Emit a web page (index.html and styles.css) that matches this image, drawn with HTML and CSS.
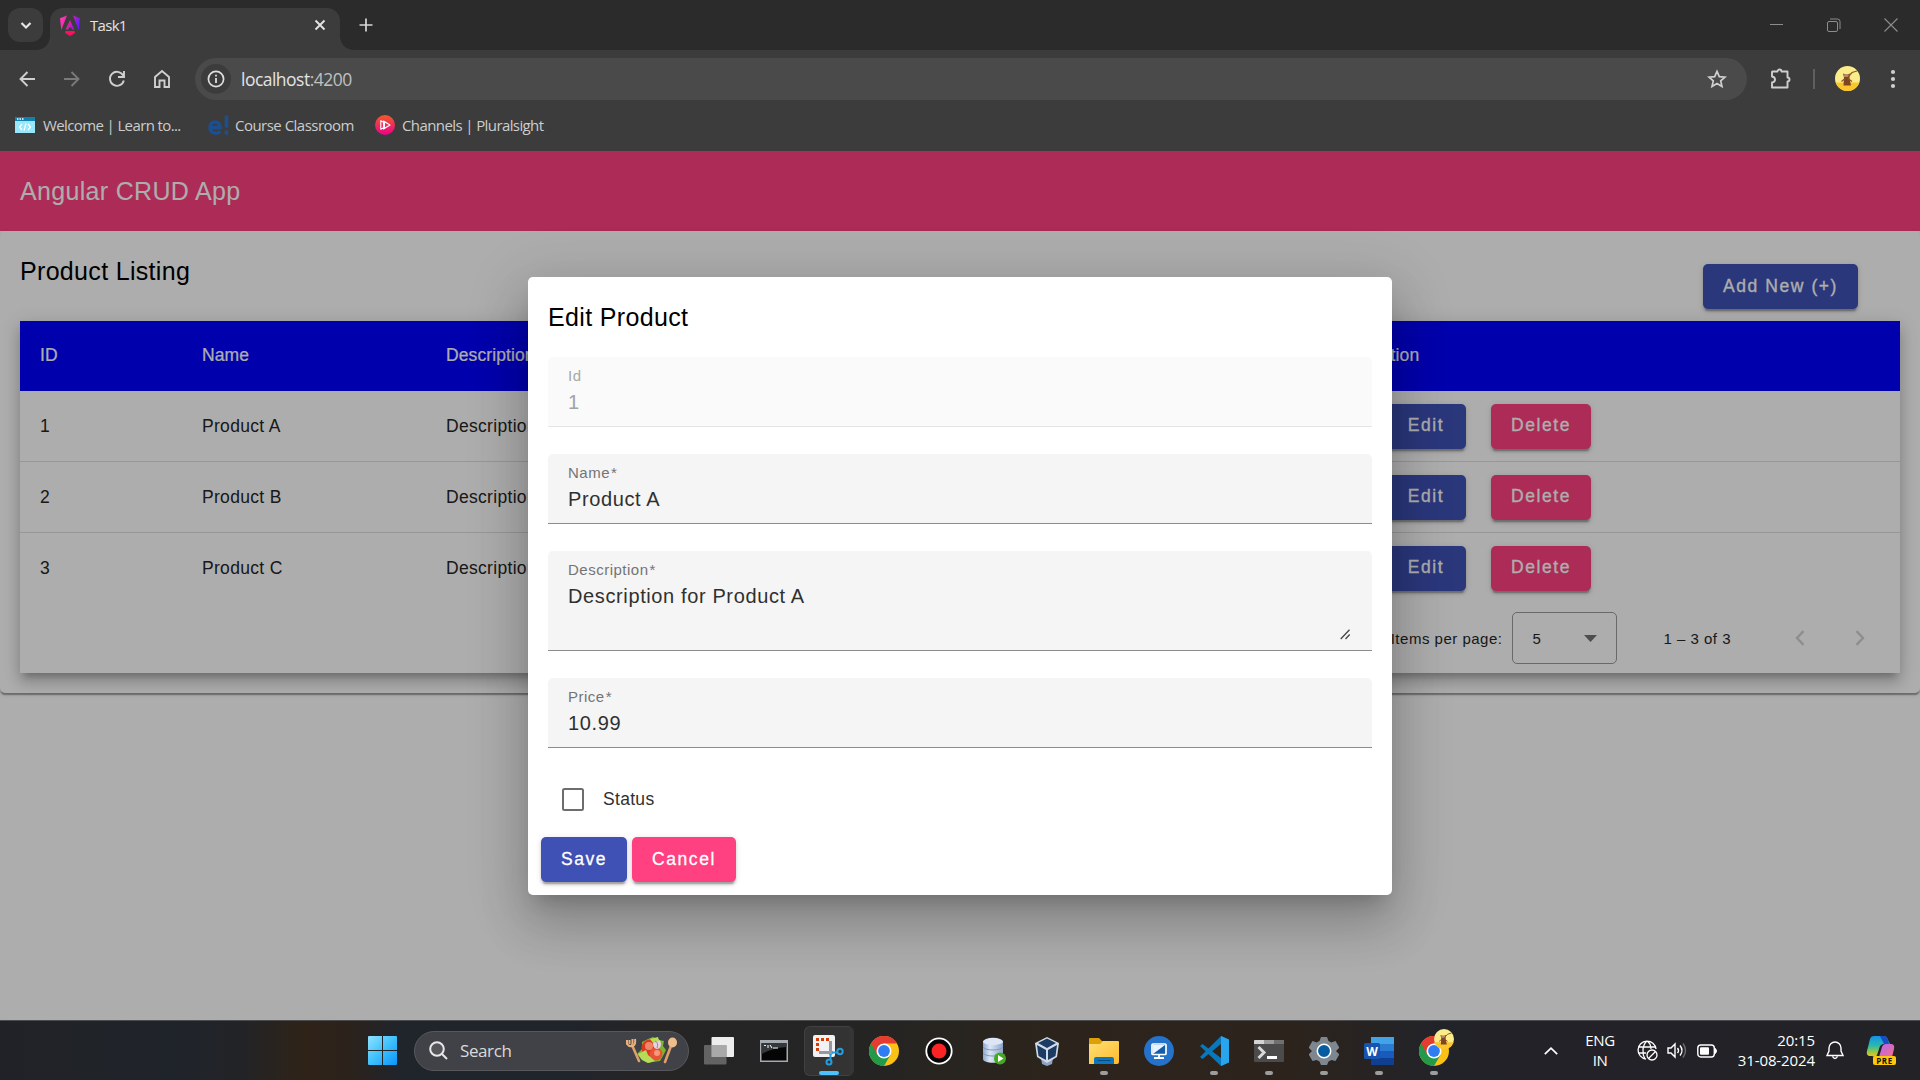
FILE: index.html
```html
<!DOCTYPE html>
<html lang="en">
<head>
<meta charset="utf-8">
<title>Task1</title>
<link rel="stylesheet" href="styles.css">
</head>
<body>
<svg width="0" height="0" class="defs" aria-hidden="true">
  <defs>
    <linearGradient id="ng" x1="0" y1="0" x2="1" y2="0.3"><stop offset="0" stop-color="#ff41c8"/><stop offset=".5" stop-color="#f0209a"/><stop offset="1" stop-color="#6a1bff"/></linearGradient>
    <linearGradient id="win" x1="0" y1="0" x2="1" y2="1"><stop offset="0" stop-color="#8fe3ff"/><stop offset=".5" stop-color="#3fc0fb"/><stop offset="1" stop-color="#0a94fb"/></linearGradient>
    <linearGradient id="plural" x1="0" y1="0" x2="0" y2="1"><stop offset="0" stop-color="#f15b2a"/><stop offset="1" stop-color="#ec008c"/></linearGradient>
    <linearGradient id="folder" x1="0" y1="0" x2="1" y2="1"><stop offset="0" stop-color="#ffdf76"/><stop offset="1" stop-color="#fdbc2c"/></linearGradient>
    <linearGradient id="disk" x1="0" y1="0" x2="1" y2="0"><stop offset="0" stop-color="#8fa8cf"/><stop offset=".35" stop-color="#dde7f6"/><stop offset="1" stop-color="#8ba3c9"/></linearGradient>
    <linearGradient id="copA" x1="0" y1="0" x2="0" y2="1"><stop offset="0" stop-color="#1592ea"/><stop offset=".45" stop-color="#26b8b0"/><stop offset=".8" stop-color="#a5c83c"/><stop offset="1" stop-color="#f5c21b"/></linearGradient>
    <linearGradient id="copB" x1="0" y1="0" x2="1" y2="1"><stop offset="0" stop-color="#b765f4"/><stop offset="1" stop-color="#f2708a"/></linearGradient>
    <symbol id="chrome" viewBox="0 0 30 30">
      <circle cx="15" cy="15" r="15" fill="#fbc116"/>
      <path d="M15 15 L2 7.5 A15 15 0 0 0 15 30 L21.5 18.7Z" fill="#229a4a"/>
      <path d="M2 7.5 A15 15 0 0 1 28 7.5 H15 L8.5 18.7Z" fill="#e53b30"/>
      <circle cx="15" cy="15" r="7.5" fill="#fff"/><circle cx="15" cy="15" r="5.9" fill="#2f7cf3"/>
    </symbol>
    <symbol id="avatar" viewBox="0 0 25 25">
      <circle cx="12.5" cy="12.5" r="12.5" fill="#fbec8b"/><path d="M.6 16.5H24.4A12.5 12.5 0 0 1 .6 16.5Z" fill="#fbc62c"/>
      <path d="M8.5 19.5L9 11.5L8 7.5L10.5 8.5H12.5L15 7.5L14.5 12L16 19.5Z" fill="#7e4522"/><path d="M9 8.5H14V11H9Z" fill="#b98a62"/><path d="M6.5 15.5L10 12.5M13 12.5L17 15.5M13 11L17 6.500L22 5" fill="none" stroke="#8f5527" stroke-width="1.2"/>
    </symbol>
  </defs>
</svg>

<header class="browser">
  <div class="tabstrip">
    <div class="tab-search"><svg width="12" height="12" viewBox="0 0 12 12"><path d="M1.500 4l4.500 4.500L10.500 4" fill="none" stroke="#e6e6e6" stroke-width="2.200"/></svg></div>
    <div class="tab">
      <svg width="20" height="21" viewBox="0 0 20 21" fill="url(#ng)"><path d="M7 .5L0 3.300L1.300 15L7 .5ZM13 .5L20 3.300L18.700 15L13 .5ZM10 5L5.600 14.500H8.300L9 12.500H11.300L12 14.500H14.400Z"/><path d="M5.500 16H14.500L15 18L10 21L5 18Z" fill="#fa1060"/></svg>
      <span class="tab-title">Task1</span>
      <svg class="tab-close" width="12" height="12" viewBox="0 0 12 12"><path d="M1.500 1.500l9 9M10.500 1.500l-9 9" stroke="#e3e3e3" stroke-width="1.900"/></svg>
    </div>
    <svg class="new-tab" width="14" height="14" viewBox="0 0 14 14"><path d="M7 .5v13M.5 7h13" stroke="#d8d8d8" stroke-width="1.700"/></svg>
    <div class="window-controls">
      <svg width="14" height="14" viewBox="0 0 14 14"><path d="M0 6.500h13" stroke="#8d8d8d"/></svg>
      <svg width="14" height="14" viewBox="0 0 14 14" fill="none" stroke="#8d8d8d"><rect x=".5" y="3.500" width="10" height="10" rx="1.500"/><path d="M3 1h7.500a2.500 2.500 0 0 1 2.500 2.500v7.500"/></svg>
      <svg width="14" height="14" viewBox="0 0 14 14"><path d="M.5.5l13 13M13.500.5l-13 13" stroke="#8d8d8d" stroke-width="1.100"/></svg>
    </div>
  </div>
  <div class="toolbar">
    <div class="nav">
      <svg width="18" height="18" viewBox="0 0 18 18" fill="none" stroke="#cfcfcf" stroke-width="1.900"><path d="M17 9H2.500M9.500 2L2.500 9l7 7"/></svg>
      <svg width="18" height="18" viewBox="0 0 18 18" fill="none" stroke="#7a7a7a" stroke-width="1.900"><path d="M1 9h14.500M8.500 2l7 7-7 7"/></svg>
      <svg width="18" height="18" viewBox="0 0 18 18" fill="none" stroke="#cfcfcf" stroke-width="1.900"><path d="M15.800 10.500A7 7 0 1 1 15 5.200L16 6.500M16 1v6h-6"/></svg>
      <svg width="18" height="20" viewBox="0 0 18 20" fill="none" stroke="#cfcfcf" stroke-width="1.900"><path d="M2 8L9 2l7 6v10h-4.500v-6.500h-5V18H2Z"/></svg>
    </div>
    <div class="omnibox">
      <div class="site-info"><svg width="18" height="18" viewBox="0 0 18 18"><circle cx="9" cy="9" r="7.600" fill="none" stroke="#dedede" stroke-width="1.700"/><path d="M9 8v5M9 4.800v1.800" stroke="#dedede" stroke-width="1.800"/></svg></div>
      <span class="url">localhost<span class="port">:4200</span></span>
      <svg class="star" width="20" height="20" viewBox="0 0 20 20"><path d="M10 2.300l2.300 5.300 5.700.5-4.300 3.800 1.300 5.700-5-3-5 3 1.300-5.700L2 8.100l5.700-.5Z" fill="none" stroke="#cfcfcf" stroke-width="1.700"/></svg>
    </div>
    <div class="tools">
      <svg width="22" height="22" viewBox="0 0 22 22"><path d="M2.500 3.500H7.500a2 2 0 0 1 4 0H17.500V9.500a2 2 0 0 1 0 4V19.500H2V14.500c4-.6 4-5.400 0-6V4Z" fill="none" stroke="#cfcfcf" stroke-width="1.900" stroke-linejoin="round"/></svg>
      <span class="tool-divider"></span>
      <svg class="profile" width="25" height="25"><use href="#avatar"/></svg>
      <svg width="6" height="20" viewBox="0 0 6 20" fill="#cfcfcf"><circle cx="3" cy="3" r="2.100"/><circle cx="3" cy="10" r="2.100"/><circle cx="3" cy="17" r="2.100"/></svg>
    </div>
  </div>
  <nav class="bookmarks">
    <div class="bookmark b1"><svg width="20" height="16" viewBox="0 0 20 16"><path fill="#98e6fa" d="M0 0h20v16H0z"/><path fill="#1182ad" d="M0 0h20v4H0z"/><path d="M2 2h1.500M4.500 2H6M7 2h1.500" stroke="#fff" stroke-width="1.500"/><path d="M7 7l-2.500 3L7 13M13 7l2.500 3-2.500 3M11 6.500l-2 7" fill="none" stroke="#fff" stroke-width="1.200"/></svg><span>Welcome | Learn to...</span></div>
    <div class="bookmark b2"><svg width="21" height="20" viewBox="0 0 21 20" fill="none" stroke="#1b4f91" stroke-width="3.500"><path d="M2 12.500H12C12 5 2 5 2 12.500C2 18.500 9 19.500 12.500 16.500M18.500.500V12.500M18.500 15.500v4"/></svg><span>Course Classroom</span></div>
    <div class="bookmark b3"><svg width="20" height="20" viewBox="0 0 20 20"><circle cx="10" cy="10" r="10" fill="url(#plural)"/><path d="M5.800 5.700V14.300L9.500 12.200V7.800ZM8.500 6V14L15 10Z" fill="none" stroke="#fff" stroke-width="1.100" stroke-linejoin="round"/></svg><span>Channels | Pluralsight</span></div>
  </nav>
</header>

<main class="page">
  <div class="appbar">Angular CRUD App</div>
  <section class="card">
    <div class="card-head"><h1>Product Listing</h1><div class="btn primary add">Add New (+)</div></div>
    <div class="table">
      <div class="row head"><span>ID</span><span>Name</span><span>Description</span><span class="action">Action</span></div>
      <div class="row"><span>1</span><span>Product A</span><span>Description for Product A</span><span class="actions"><b class="btn primary">Edit</b><b class="btn accent">Delete</b></span></div>
      <div class="row"><span>2</span><span>Product B</span><span>Description for Product B</span><span class="actions"><b class="btn primary">Edit</b><b class="btn accent">Delete</b></span></div>
      <div class="row last"><span>3</span><span>Product C</span><span>Description for Product C</span><span class="actions"><b class="btn primary">Edit</b><b class="btn accent">Delete</b></span></div>
      <div class="paginator">
        <span>Items per page:</span>
        <div class="select"><span>5</span><svg width="13" height="7" viewBox="0 0 13 7"><path d="M0 0h13L6.500 7z" fill="#737373"/></svg></div>
        <span class="range">1 – 3 of 3</span>
        <svg class="prev" width="10" height="16" viewBox="0 0 10 16"><path d="M8.500 1.200L2 8l6.500 6.800" fill="none" stroke="#d2d2d2" stroke-width="2.400"/></svg>
        <svg width="10" height="16" viewBox="0 0 10 16"><path d="M1.500 1.200L8 8l-6.500 6.800" fill="none" stroke="#d2d2d2" stroke-width="2.400"/></svg>
      </div>
    </div>
  </section>
  <div class="backdrop">
    <form class="dialog">
      <h2>Edit Product</h2>
      <div class="field disabled"><label>Id</label><div class="value">1</div></div>
      <div class="field"><label>Name<i>*</i></label><div class="value">Product A</div></div>
      <div class="field area"><label>Description<i>*</i></label><div class="value">Description for Product A</div>
        <svg class="grip" width="11" height="11" viewBox="0 0 11 11"><path d="M.7 10L9.500.7M5.500 10L9.700 5.500" stroke="#444" stroke-width="1.300" fill="none"/></svg></div>
      <div class="field"><label>Price<i>*</i></label><div class="value">10.99</div></div>
      <div class="check"><span class="box"></span><span>Status</span></div>
      <div class="dialog-actions"><div class="btn primary">Save</div><div class="btn accent">Cancel</div></div>
    </form>
  </div>
</main>

<footer class="taskbar">
  <svg class="start" width="29" height="29" viewBox="0 0 29 29"><path d="M0 1a1 1 0 0 1 1-1H14V14H0ZM15 0H28a1 1 0 0 1 1 1V14H15ZM0 15H14V29H1a1 1 0 0 1-1-1ZM15 15H29V28a1 1 0 0 1-1 1H15Z" fill="url(#win)"/></svg>
  <div class="search">
    <svg width="19" height="19" viewBox="0 0 19 19" fill="none" stroke="#e8e8e8" stroke-width="2"><circle cx="8" cy="8" r="6.800" fill="#55565a"/><path d="M13 13l5 5"/></svg>
    <span>Search</span>
    <svg class="salad" width="52" height="27" viewBox="0 0 52 27">
      <path d="M6 8L13 24M45 9L39 25" stroke="#dda06b" stroke-width="2.600" stroke-linecap="round"/>
      <path d="M1 3V7Q3 10 7 9Q10 7 9 2M3.500 3V7M6.500 2V7" fill="none" stroke="#e9b27c" stroke-width="2"/>
      <ellipse cx="46.500" cy="5.500" rx="4.500" ry="5" fill="#efbd8b"/>
      <path d="M16 5L22 2L27 0L33 3L38 4L37 9L40 13L37 19L34 24L27 25L22 26L15 22L11 17L16 12Z" fill="#7cb62c"/>
      <circle cx="24" cy="11" r="8.500" fill="#d63b20"/><circle cx="30" cy="17" r="6.500" fill="#e65336"/><circle cx="23" cy="9" r="4" fill="#ef866a"/><circle cx="31" cy="16" r="3" fill="#f29a79"/>
      <ellipse cx="31" cy="7" rx="4" ry="5" fill="#e5d2e3"/><path d="M12 17l8-4 2 5 7 6-7 2-6-3ZM24 2l8-2 1 4-6 2Z" fill="#b6dc58"/><path d="M29 4q4 2 2 7" fill="none" stroke="#a779a9"/>
    </svg>
  </div>
  <div class="apps">
    <div class="app"><svg width="30" height="28" viewBox="0 0 30 28"><rect x="7.500" width="22.500" height="20" rx="1" fill="#ededed"/><rect y="8" width="22.500" height="19.500" rx="1" fill="#6e6e6e" opacity=".85"/><path d="M7.500 8h15v12h-15z" fill="#a9a9a9"/></svg></div>
    <div class="app"><svg width="28" height="22" viewBox="0 0 28 22"><path d="M0 0h28v22H0z" fill="#a5abb0"/><path d="M1.500 3h25v17.500h-25z" fill="#050505"/><path d="M1.500 3h25v4Q12 8 1.500 14Z" fill="#34383a"/><path d="M4 5.500h2M8 5v3M10 5l2 3M13 8h5" stroke="#eee" stroke-width="1.100"/></svg></div>
    <div class="app active"><svg width="31" height="31" viewBox="0 0 31 31"><rect width="22" height="22" rx="2" fill="#f2f2f5"/><path d="M4.500 16V4.500H16" fill="none" stroke="#d83b01" stroke-width="3" stroke-dasharray="3 2"/><path d="M6 17.500h14M17.500 6v14" stroke="#949aa2" stroke-width="3"/><g fill="none" stroke="#239de0" stroke-width="2"><path d="M17.500 19v6M19 17.500h6"/><circle cx="16" cy="27" r="2.500"/><circle cx="27" cy="16.500" r="2.700"/></g></svg></div>
    <div class="app"><svg width="30" height="30"><use href="#chrome"/></svg></div>
    <div class="app"><svg width="28" height="28" viewBox="0 0 28 28"><circle cx="14" cy="14" r="12.700" fill="#050505" stroke="#fff" stroke-width="1.800"/><circle cx="14" cy="14" r="7.500" fill="#fb2323"/></svg></div>
    <div class="app"><svg width="24" height="28" viewBox="0 0 24 28"><path d="M1 4v18c0 5 20 5 20 0V4Z" fill="url(#disk)"/><ellipse cx="11" cy="4.500" rx="10" ry="3.700" fill="#dce6f4"/><path d="M1 10c2 4 18 4 20 0M1 16c2 4 18 4 20 0" fill="none" stroke="#7f98bd"/><circle cx="18" cy="21.500" r="6" fill="#43a91e"/><path d="M16 18v7l5.500-3.500Z" fill="#fff"/></svg></div>
    <div class="app vbox"><svg width="26" height="30" viewBox="0 0 26 30"><path d="M7 22h12l-1 6-5 2-5-2Z" fill="#8da3c2"/><path d="M13 1L25 7L23 21L13 27L3 21L1 7Z" fill="#d1dbe8"/><path d="M13 2.500L22 7L13 12L4 7ZM3 9L12 14V24L4.500 20ZM23 9L14 14V24L21.500 20Z" fill="#1b3b64"/></svg></div>
    <div class="app running"><svg width="30" height="27" viewBox="0 0 30 27"><path d="M0 2Q0 1 1 1H10L13 4H20V10H0Z" fill="#dda007"/><path d="M0 7H11L14 4H29Q30 4 30 5V25Q30 27 28 27H0Z" fill="url(#folder)"/><path d="M5 27V22Q5 20 7 20H23Q25 20 25 22V27Z" fill="#0c76be"/><path d="M8.500 23.500h13" stroke="#064b81"/></svg></div>
    <div class="app"><svg width="30" height="30" viewBox="0 0 30 30"><circle cx="15" cy="15" r="15" fill="#2472c9"/><rect x="8" y="8" width="14" height="10.500" rx="1" fill="#145da8" stroke="#fff" stroke-width="1.700"/><path d="M9 9h12L9 18Z" fill="#e7f4ff"/><path d="M15 19v3M10 22h10" stroke="#fff" stroke-width="1.800"/></svg></div>
    <div class="app running"><svg width="30" height="30" viewBox="0 0 30 30"><path d="M22 0L30 4V26L22 30L1 10L3.500 8L22 22V8L3.500 23L1 21L21 1Z" fill="#0878bd"/><path d="M22 0L30 3.500V26.500L22 30Z" fill="#28a5ed"/></svg></div>
    <div class="app running"><svg width="30" height="22" viewBox="0 0 30 22"><rect width="30" height="22" rx="1" fill="#4b4b4b"/><path d="M0 1a1 1 0 0 1 1-1H10V4H0Z" fill="#d4d4d4"/><path d="M10 0h10v4H10Z" fill="#9b9b9b"/><path d="M20 0h10v4H20Z" fill="#707070"/><path d="M4.500 7l5.500 5.500L4.500 18" fill="none" stroke="#d8d8d8" stroke-width="3"/><path d="M13 17.500h10" stroke="#fff" stroke-width="3"/></svg></div>
    <div class="app running"><svg width="30" height="30" viewBox="0 0 30 30"><path d="M12 1h6l1.500 4 3 1.500L26.500 5 30 11v1l-3 3 3 3v1l-3.500 6-4-1-3 1.500L18 29h-6l-1.500-3.500-3-1.500-4 1L0 19v-1l3-3-3-3v-1l3.500-6 4 1.500 3-1.500Z" fill="#7e8790"/><circle cx="15" cy="15" r="6.700" fill="#075c9f" stroke="#fff" stroke-width="1.500"/></svg></div>
    <div class="app running"><svg width="30" height="28" viewBox="0 0 30 28"><path d="M7 0h23v7H7z" fill="#42a3e8"/><path d="M7 7h23v7H7z" fill="#2a7cd2"/><path d="M7 14h23v7H7z" fill="#185abd"/><path d="M7 21h23v7H7z" fill="#103f91"/><rect y="6" width="16" height="16" rx="1.500" fill="#1853ae"/><text x="8" y="18.500" text-anchor="middle" class="word">W</text></svg></div>
    <div class="app running badge"><svg width="30" height="30"><use href="#chrome"/></svg><svg class="badge-pic" width="20" height="20"><use href="#avatar"/></svg></div>
  </div>
  <div class="tray">
    <svg class="chev" width="14" height="8" viewBox="0 0 14 8"><path d="M.8 7.200L7 1.200l6.200 6" fill="none" stroke="#fff" stroke-width="1.700"/></svg>
    <div class="lang">ENG<br>IN</div>
    <svg class="globe" width="21" height="21" viewBox="0 0 21 21" fill="none" stroke="#fff" stroke-width="1.300"><path d="M9 19A9 9 0 1 1 19 9M1 7h17M1 13h8M8 19C5 14 5 5 10 1C13 3 14 6 14 9"/><circle cx="15" cy="15" r="5"/><path d="M11.500 18.500l7-7"/></svg>
    <svg class="sound" width="20" height="17" viewBox="0 0 20 17" fill="none" stroke="#fff" stroke-width="1.400"><path d="M1 6h3l4-4v13l-4-4H1ZM10.500 6q2 2.500 0 5M13 3.500q4 5 0 10"/><path d="M16 1.500q5 7 0 14" stroke="#6b6b6e"/></svg>
    <svg class="battery" width="21" height="14" viewBox="0 0 21 14"><rect x=".8" y="1" width="16.500" height="12" rx="3" fill="none" stroke="#fff" stroke-width="1.400"/><rect x="3" y="3.200" width="9" height="7.600" rx="1" fill="#fff"/><path d="M18.500 4.500q2 2.500 0 5Z" fill="#fff" stroke="#fff"/></svg>
    <div class="clock">20:15<br>31-08-2024</div>
    <svg class="bell" width="18" height="19" viewBox="0 0 18 19" fill="none" stroke="#fff" stroke-width="1.400"><path d="M1 14.500L3 10V7a6 6 0 0 1 12 0v3l2 4.500ZM6.500 15.500q2.500 4 5 0"/></svg>
    <div class="copilot"><svg width="29" height="29" viewBox="0 0 29 29"><path d="M8 0H18Q21 0 22 4L24 8H18Q14 8 13 13L11 19Q10 22 6 20H3Q0 19 1 15L4 3Q5 0 8 0Z" fill="url(#copA)"/><path d="M14 0h4q3 0 4 4l1 4h-5Z" fill="#174ec5"/><path d="M20 8H25Q29 8 28 13L26 21H13L16 11Q17 8 20 8Z" fill="url(#copB)"/></svg><span>PRE</span></div>
  </div>
</footer>
</body>
</html>
```
FILE: styles.css
```css
*, *::before, *::after { box-sizing: border-box; }
body {
  margin: 0; width: 1920px; height: 1080px; overflow: hidden;
  display: flex; flex-direction: column;
  font-family: "Liberation Sans", Arial, sans-serif;
}
.defs { position: absolute; }
svg { display: block; flex: none; }
h1, h2 { margin: 0; font-weight: 400; }

/* browser chrome */
.browser { height: 151px; flex: none; background: #3c3c3c; font-family: "Open Sans", sans-serif; color: #e3e3e3; }
.tabstrip { height: 50px; background: #2b2b2b; display: flex; padding: 8px 0 0 8px; }
.tab-search { width: 35px; height: 34px; border-radius: 12px; background: #3c3c3c; display: flex; align-items: center; justify-content: center; }
.tab {
  position: relative; margin-left: 7px; width: 290px; height: 42px; padding: 0 14px 8px 10px;
  background: #3c3c3c; border-radius: 13px 13px 0 0; display: flex; align-items: center;
}
.tab::before, .tab::after { content: ""; position: absolute; bottom: 0; width: 13px; height: 13px; }
.tab::before { left: -13px; background: radial-gradient(circle at 0 0, transparent 12.5px, #3c3c3c 13px); }
.tab::after { right: -13px; background: radial-gradient(circle at 100% 0, transparent 12.5px, #3c3c3c 13px); }
.tab-title { margin-left: 10px; font-size: 15px; letter-spacing: -.7px; }
.tab-close { margin-left: auto; }
.new-tab { margin: 10px 0 0 18.500px; }
.window-controls { margin: 10px 22px 0 auto; display: flex; gap: 43px; }
.toolbar { height: 58px; display: flex; align-items: center; }
.nav { width: 195px; padding-left: 18px; display: flex; align-items: center; gap: 27px; }
.omnibox { width: 1552px; height: 42px; border-radius: 21px; background: #4a4a4a; display: flex; align-items: center; padding: 0 20px 0 6px; }
.site-info { width: 30px; height: 30px; border-radius: 50%; background: #3c3c3c; display: flex; align-items: center; justify-content: center; }
.url { margin-left: 10px; font-size: 17.500px; letter-spacing: -.52px; padding-bottom: 1px; }
.port { color: #c0c0c0; }
.star { margin-left: auto; }
.tools { display: flex; align-items: center; padding: 0 0 1px 23px; }
.tool-divider { width: 2px; height: 20px; background: #5f5f5f; margin-left: 21px; }
.profile { margin: 0 30px 0 20px; }
.bookmarks { height: 43px; display: flex; padding: 0 15px; }
.bookmark { height: 34px; display: flex; align-items: center; gap: 7px; font-size: 15px; color: #cdcdcd; white-space: nowrap; }
.bookmark span { margin-left: 1px; }
.b1 { width: 193px; letter-spacing: -.62px; }
.b2 { width: 167px; gap: 5px; letter-spacing: -.52px; }
.b3 { gap: 6px; letter-spacing: -.6px; }

/* application page */
.page { position: relative; height: 869px; flex: none; background: #fff; }
.appbar { height: 80px; background: #ff4081; color: #fff; font-size: 25px; letter-spacing: .32px; display: flex; align-items: center; padding: 0 20px; }
.card { height: 462px; border-radius: 5px; background: #fff; padding: 0 20px; box-shadow: 0 2.500px 1.250px -1.250px rgba(0,0,0,.2), 0 1.250px 1.250px rgba(0,0,0,.14), 0 1.250px 3.750px rgba(0,0,0,.12); }
.card-head { height: 90px; display: flex; justify-content: space-between; align-items: flex-start; }
.card-head h1 { margin-top: 25px; font-size: 25px; line-height: 30px; letter-spacing: .32px; color: #000; }
.btn {
  height: 45px; min-width: 80px; padding: 0 20px 1px; border-radius: 5px; color: #fff;
  font-size: 17.500px; font-weight: 400; letter-spacing: 1.560px; white-space: nowrap; -webkit-text-stroke: .3px currentColor;
  display: flex; align-items: center; justify-content: center;
  box-shadow: 0 3.750px 1.250px -2.500px rgba(0,0,0,.2), 0 2.500px 2.500px rgba(0,0,0,.14), 0 1.250px 6.250px rgba(0,0,0,.12);
}
.primary { background: #3f51b5; }
.accent { background: #ff4081; }
.add { margin: 33px 42px 0 0; width: 155px; }
.table { height: 352px; background: #fff; box-shadow: 0 6.250px 6.250px -3.750px rgba(0,0,0,.2), 0 10px 12.500px 1.250px rgba(0,0,0,.14), 0 3.750px 17.500px 2.500px rgba(0,0,0,.12); }
.row { height: 71px; display: grid; grid-template-columns: 162px 244px 920px 1fr; align-items: center; padding-left: 20px; border-bottom: 1px solid #dfdfdf; font-size: 17.500px; letter-spacing: .31px; color: #262626; }
.head { height: 70px; padding-bottom: 2px; background: #0000ff; color: #fff; border: 0; letter-spacing: .1px; -webkit-text-stroke: .2px #fff; }
.head .action { margin-left: 4px; }
.row > span { padding-top: 1px; }
.row > .actions { display: flex; gap: 25px; padding: 0 0 0 20px; }
.actions .accent { width: 100px; }
.last { height: 70px; border: 0; }
.paginator { height: 71px; display: flex; align-items: center; justify-content: flex-end; padding: 0 35px 1px 0; font-size: 15px; letter-spacing: .5px; color: #262626; }
.select { width: 105px; height: 52px; margin-left: 10px; padding: 0 19px; border: 1px solid #9b9b9b; border-radius: 5px; display: flex; justify-content: space-between; align-items: center; }
.range { margin-left: 46px; }
.prev { margin: 0 50px 0 64px; }

.backdrop { position: absolute; inset: 0; background: rgba(0,0,0,.32); display: flex; justify-content: center; align-items: flex-start; padding-top: 126px; overflow: hidden; }
.dialog { width: 864px; height: 618px; background: #fff; border-radius: 5px; padding: 0 20px; box-shadow: 0 13.750px 18.750px -8.750px rgba(0,0,0,.2), 0 30px 47.500px 3.750px rgba(0,0,0,.14), 0 11.250px 57.500px 10px rgba(0,0,0,.12); }
.dialog h2 { height: 80px; padding-top: 25px; font-size: 25px; line-height: 30px; letter-spacing: .35px; color: #000; }
.field { position: relative; height: 70px; margin-bottom: 27px; padding: 10px 20px 0; background: #f5f5f5; border-bottom: 1px solid #8c8c8c; border-radius: 5px 5px 0 0; color: #303030; }
.field label { display: block; font-size: 15px; line-height: 18px; letter-spacing: .5px; color: #747474; }
.field i { font-style: normal; margin-left: 1px; }
.value { font-size: 20px; line-height: 30px; margin-top: 2px; letter-spacing: .62px; }
.disabled { background: #fafafa; border-color: #e5e5e5; color: #a3a3a3; }
.disabled label { color: #a8a8a8; }
.area { height: 100px; }
.grip { position: absolute; right: 21px; bottom: 10px; }
.check { margin: 34px 0 0 14px; height: 35px; display: flex; align-items: center; gap: 19px; font-size: 17.500px; letter-spacing: .31px; color: #303030; }
.box { width: 22px; height: 23px; border: 2px solid #6d6d6d; border-radius: 2.500px; }
.dialog-actions { display: flex; gap: 5px; margin: 20px 0 0 -7px; }
.dialog-actions .primary { width: 86px; }
.dialog-actions .accent { width: 104px; }

/* taskbar */
.taskbar {
  height: 60px; flex: none; display: flex; align-items: center; border-top: 1px solid #4b4c4e; padding-left: 368px;
  color: #fff; font-family: "Open Sans", sans-serif;
  background: linear-gradient(90deg, #212227 0, #1f242a 170px, #222327 240px, #2f2318 305px, #2b221c 350px, #20242b 400px, #20242b 570px, #262524 660px, #242424 850px, #2c241c 1050px, #2c231d 1300px, #222329 1440px, #222227 1920px);
}
.search { width: 275px; height: 40px; margin-left: 17px; border: 1px solid #57585b; border-radius: 20px; background: #414247; display: flex; align-items: center; padding: 0 10px 0 14px; font-size: 17px; letter-spacing: -.4px; color: #dadada; }
.search span { margin-left: 12px; padding-bottom: 1px; }
.salad { margin-left: auto; }
.apps { display: flex; margin-left: 2px; }
.app { position: relative; width: 55px; height: 50px; display: flex; align-items: center; justify-content: center; }
.vbox { padding-right: 4px; }
.running::after, .active::after { content: ""; position: absolute; left: 24px; bottom: 1px; width: 8px; height: 4px; border-radius: 2px; background: #9d9d9d; }
.active::before { content: ""; position: absolute; left: 3px; top: 0; width: 50px; height: 50px; border: 1px solid #414141; border-right-width: 5px; border-right-color: #353535; border-radius: 6px; background: #333; }
.active svg { position: relative; }
.active::after { left: 18px; width: 20px; background: #4cc2ff; }
.badge-pic { position: absolute; right: 7px; top: 3px; }
.word { font: bold 12px "Open Sans", sans-serif; fill: #fff; }
.tray { margin-left: auto; display: flex; align-items: center; padding-right: 25px; font-size: 15px; line-height: 20px; letter-spacing: -.4px; }
.lang, .clock { padding-bottom: 2px; }
.lang { width: 40px; margin-left: 22px; text-align: center; }
.globe { margin-left: 17px; }
.sound { margin-left: 9px; }
.battery { margin-left: 10px; }
.clock { width: 90px; margin-left: 7px; text-align: right; letter-spacing: -.1px; }
.bell { margin-left: 11px; }
.copilot { position: relative; margin-left: 22px; }
.copilot span { position: absolute; right: -1px; bottom: 0; width: 23px; height: 9px; border-radius: 2px; background: #fdc80c; color: #111; font-size: 8px; font-weight: 700; line-height: 9px; text-align: center; letter-spacing: .5px; }
```
